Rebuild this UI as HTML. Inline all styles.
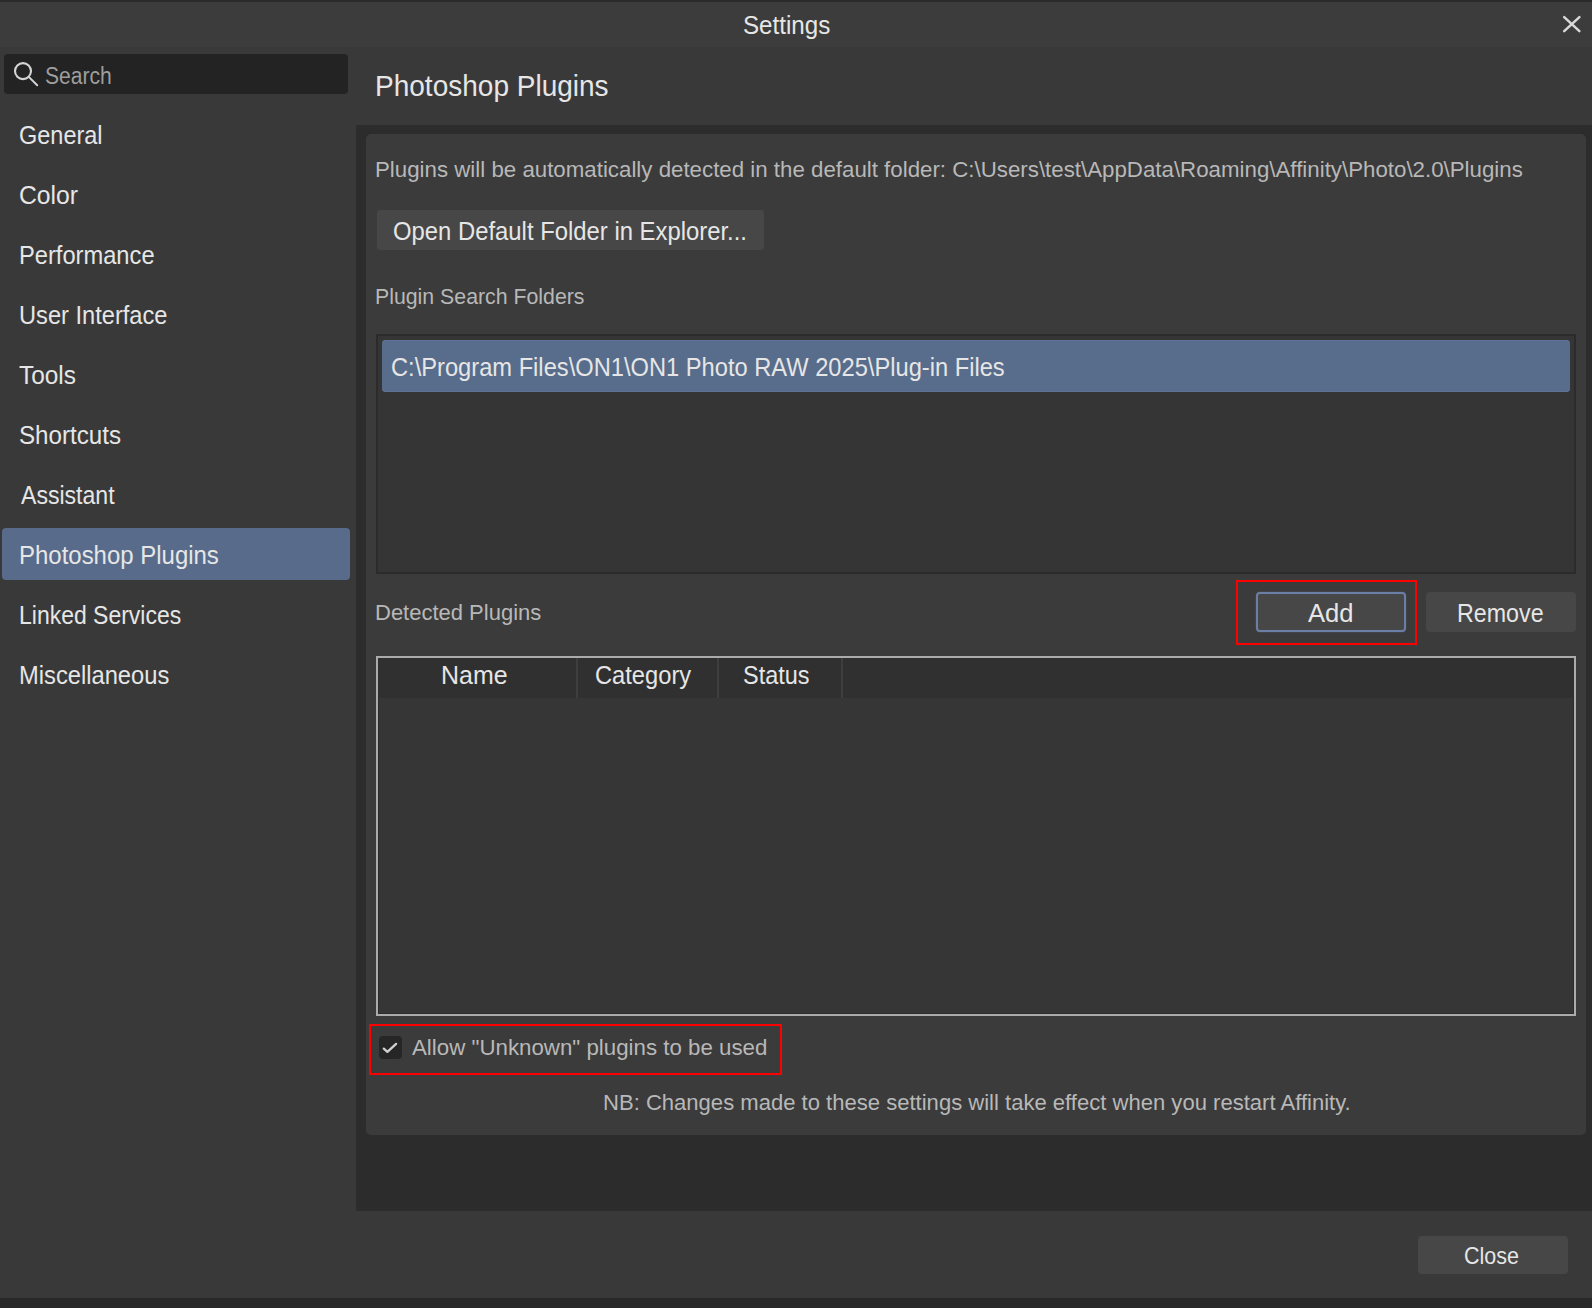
<!DOCTYPE html>
<html><head><meta charset="utf-8"><title>Settings</title>
<style>
html,body{margin:0;padding:0;width:1592px;height:1308px;overflow:hidden;background:#393939}
.b{position:absolute}
.t{position:absolute;white-space:nowrap;line-height:1;font-family:"Liberation Sans",sans-serif;transform-origin:0 0}
</style></head><body>
<div class="b" style="left:0px;top:0px;width:1592px;height:1308px;background:#393939;"></div>
<div class="b" style="left:0px;top:0px;width:1592px;height:47px;background:#3c3c3c;"></div>
<div class="b" style="left:0px;top:0px;width:1592px;height:2px;background:#2b2b2b;"></div>
<div class="t" style="left:742.79px;top:12.83px;font-size:25px;color:#e6e6e6;transform:scaleX(0.9659)">Settings</div>
<svg class="b" style="left:1556px;top:10px" width="32" height="28" viewBox="0 0 32 28"><path d="M8.2 7.2 L23.4 21.2 M23.4 7.2 L8.2 21.2" stroke="#d8d8d8" stroke-width="2.5" stroke-linecap="round"/></svg>
<div class="b" style="left:4px;top:54px;width:344px;height:40px;background:#232323;border-radius:4px"></div>
<svg class="b" style="left:8px;top:56px" width="36" height="36" viewBox="0 0 36 36"><circle cx="15" cy="15.1" r="8" fill="none" stroke="#d4d4d4" stroke-width="2.1"/><path d="M21.3 21.4 L29.2 29.3" stroke="#d4d4d4" stroke-width="2" stroke-linecap="round"/></svg>
<div class="t" style="left:45.08px;top:64.83px;font-size:23px;color:#9e9e9e;transform:scaleX(0.9167)">Search</div>
<div class="b" style="left:2px;top:528px;width:348px;height:52px;background:#586b8b;border-radius:4px"></div>
<div class="t" style="left:18.83px;top:122.83px;font-size:25px;color:#e6e6e6;transform:scaleX(0.9391)">General</div>
<div class="t" style="left:18.96px;top:182.83px;font-size:25px;color:#e6e6e6;transform:scaleX(0.9888)">Color</div>
<div class="t" style="left:19.11px;top:242.83px;font-size:25px;color:#e6e6e6;transform:scaleX(0.9471)">Performance</div>
<div class="t" style="left:18.71px;top:302.83px;font-size:25px;color:#e6e6e6;transform:scaleX(0.9457)">User Interface</div>
<div class="t" style="left:18.51px;top:362.83px;font-size:25px;color:#e6e6e6;transform:scaleX(0.9762)">Tools</div>
<div class="t" style="left:18.79px;top:422.83px;font-size:25px;color:#e6e6e6;transform:scaleX(0.9656)">Shortcuts</div>
<div class="t" style="left:20.60px;top:482.83px;font-size:25px;color:#e6e6e6;transform:scaleX(0.9225)">Assistant</div>
<div class="t" style="left:19.08px;top:542.83px;font-size:25px;color:#e6e6e6;transform:scaleX(0.9586)">Photoshop Plugins</div>
<div class="t" style="left:19.16px;top:602.83px;font-size:25px;color:#e6e6e6;transform:scaleX(0.9193)">Linked Services</div>
<div class="t" style="left:19.10px;top:662.83px;font-size:25px;color:#e6e6e6;transform:scaleX(0.9486)">Miscellaneous</div>
<div class="t" style="left:375.43px;top:72.25px;font-size:29px;color:#e6e6e6;transform:scaleX(0.9660)">Photoshop Plugins</div>
<div class="b" style="left:356px;top:125px;width:1236px;height:1086px;background:#2c2c2c;"></div>
<div class="b" style="left:366px;top:134px;width:1220px;height:1001px;background:#3b3b3b;border-radius:5px"></div>
<div class="t" style="left:374.67px;top:159.35px;font-size:22.5px;color:#b8b8b8;transform:scaleX(0.9904)">Plugins will be automatically detected in the default folder: C:\Users\test\AppData\Roaming\Affinity\Photo\2.0\Plugins</div>
<div class="b" style="left:377px;top:210px;width:387px;height:40px;background:#474747;border-radius:3px"></div>
<div class="t" style="left:392.71px;top:218.83px;font-size:25px;color:#e6e6e6;transform:scaleX(0.9540)">Open Default Folder in Explorer...</div>
<div class="t" style="left:375.34px;top:285.85px;font-size:22.5px;color:#b8b8b8;transform:scaleX(0.9463)">Plugin Search Folders</div>
<div class="b" style="left:376px;top:334px;width:1200px;height:240px;background:#353535;border:2px solid #2b2b2b;box-sizing:border-box"></div>
<div class="b" style="left:382px;top:340px;width:1188px;height:52px;background:#586c8b;border-radius:4px;box-shadow:inset 0 1px 0 #5f7399, inset 0 -1px 0 #5f7399"></div>
<div class="t" style="left:390.92px;top:355.03px;font-size:25px;color:#e6e6e6;transform:scaleX(0.9472)">C:\Program Files\ON1\ON1 Photo RAW 2025\Plug-in Files</div>
<div class="t" style="left:374.89px;top:601.55px;font-size:22.5px;color:#b8b8b8;transform:scaleX(0.9773)">Detected Plugins</div>
<div class="b" style="left:1256px;top:592px;width:150px;height:40px;background:#474747;border:2px solid #6b7fa6;border-radius:4px;box-sizing:border-box;box-shadow:0 0 0 0.5px rgba(106,126,165,0.25)"></div>
<div class="t" style="left:1308.30px;top:601.03px;font-size:25px;color:#e6e6e6;transform:scaleX(1.0222)">Add</div>
<div class="b" style="left:1426px;top:592px;width:150px;height:40px;background:#474747;border-radius:4px"></div>
<div class="t" style="left:1456.94px;top:601.03px;font-size:25px;color:#e6e6e6;transform:scaleX(0.9300)">Remove</div>
<div class="b" style="left:1236px;top:580px;width:181px;height:65px;background:transparent;border:2px solid #ff0000;box-sizing:border-box"></div>
<div class="b" style="left:376px;top:656px;width:1200px;height:360px;background:#363636;border:2px solid #ababab;box-sizing:border-box;box-shadow:inset 0 0 0 1px #2c2c2c"></div>
<div class="b" style="left:378px;top:658px;width:1196px;height:40px;background:#303030;"></div>
<div class="b" style="left:576px;top:658px;width:2px;height:40px;background:#3e3e3e;"></div>
<div class="b" style="left:717px;top:658px;width:2px;height:40px;background:#3e3e3e;"></div>
<div class="b" style="left:841px;top:658px;width:2px;height:40px;background:#3e3e3e;"></div>
<div class="t" style="left:440.60px;top:662.83px;font-size:25px;color:#e6e6e6;transform:scaleX(0.9984)">Name</div>
<div class="t" style="left:595.12px;top:662.83px;font-size:25px;color:#e6e6e6;transform:scaleX(0.9476)">Category</div>
<div class="t" style="left:742.83px;top:662.83px;font-size:25px;color:#e6e6e6;transform:scaleX(0.9372)">Status</div>
<div class="b" style="left:369px;top:1024px;width:413px;height:51px;background:transparent;border:2px solid #ff0000;box-sizing:border-box"></div>
<div class="b" style="left:379px;top:1036px;width:23px;height:23px;background:#262626;border-radius:4px"></div>
<svg class="b" style="left:379px;top:1036px" width="23" height="23" viewBox="0 0 23 23"><path d="M4.8 12.6 L8.4 15.9 L17.1 7.9" fill="none" stroke="#d0d0d0" stroke-width="2.3" stroke-linecap="round" stroke-linejoin="round"/></svg>
<div class="t" style="left:412.30px;top:1037.15px;font-size:22.5px;color:#b8b8b8;transform:scaleX(0.9909)">Allow "Unknown" plugins to be used</div>
<div class="t" style="left:602.88px;top:1091.55px;font-size:22.5px;color:#b8b8b8;transform:scaleX(0.9801)">NB: Changes made to these settings will take effect when you restart Affinity.</div>
<div class="b" style="left:0px;top:1298px;width:1592px;height:10px;background:#292929;"></div>
<div class="b" style="left:1418px;top:1236px;width:150px;height:38px;background:#474747;border-radius:4px"></div>
<div class="t" style="left:1464.40px;top:1244.06px;font-size:24.5px;color:#e6e6e6;transform:scaleX(0.8780)">Close</div>
</body></html>
